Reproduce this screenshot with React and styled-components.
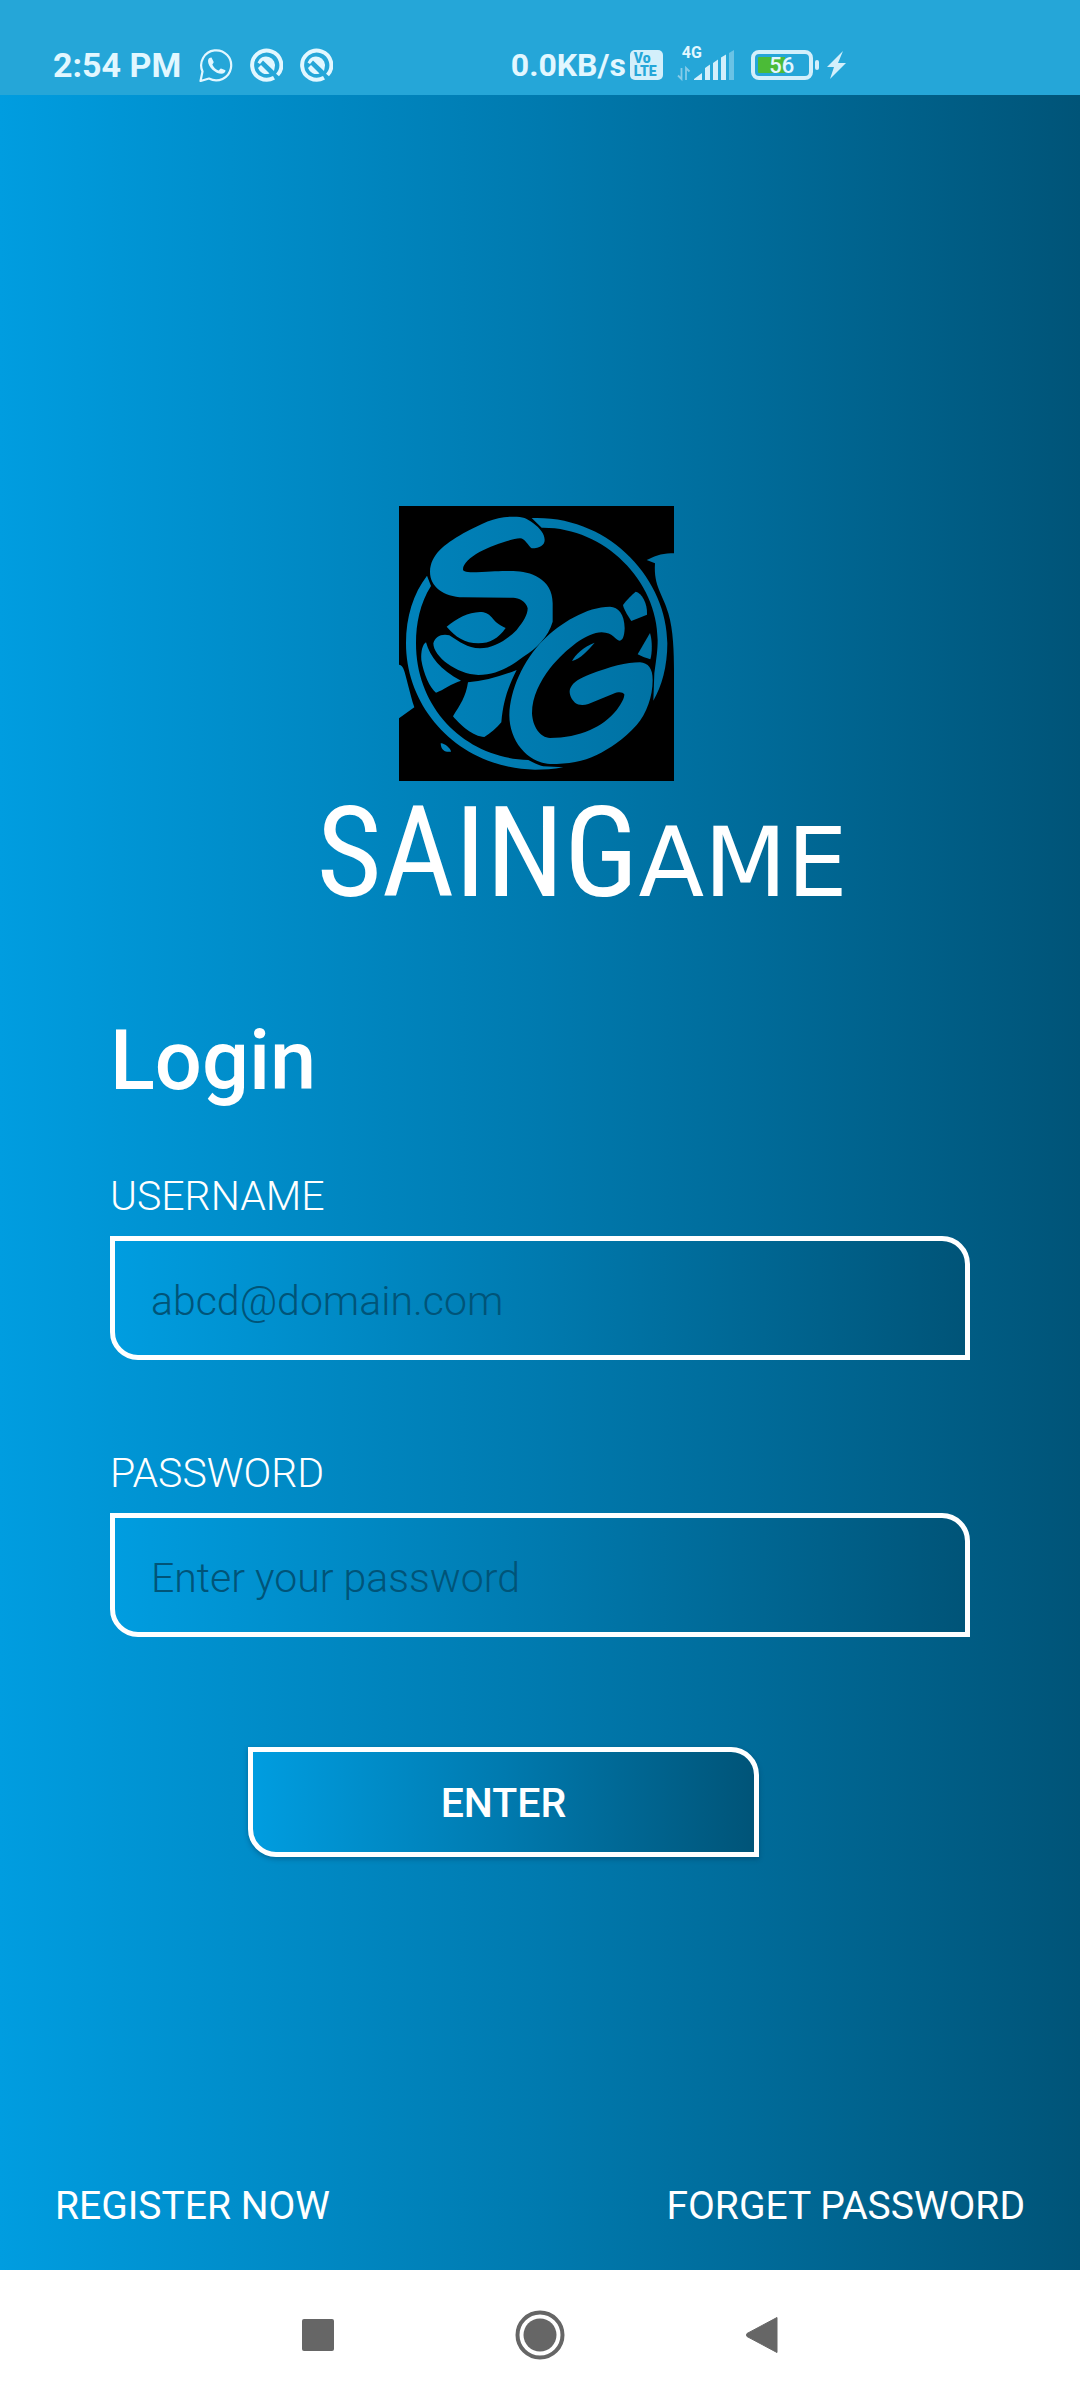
import React from "react";
import styled, { createGlobalStyle } from "styled-components";

const blueFade = "linear-gradient(90deg, #009de0 0%, #007aaf 50%, #005478 100%)";

const GlobalStyle = createGlobalStyle`
  *, *::before, *::after { box-sizing: border-box; }
  body {
    margin: 0;
    font-family: Roboto, "Noto Sans", sans-serif;
    color: #fff;
  }
`;

const Screen = styled.div`
  display: flex;
  flex-direction: column;
  min-height: 100vh;
  background: ${blueFade};
`;

const StatusBar = styled.header`
  display: flex;
  height: 95px;
  padding: 34px 53px 0;
  background: #25a6d8;
  color: #e2f7ff;
`;

const StatusGroup = styled.div`
  display: flex;
  align-items: center;
  flex: 0 0 ${(p) => p.$basis || "auto"};
  gap: ${(p) => p.$gap}px;
`;

const StatusText = styled.span`
  font-size: ${(p) => p.$size}px;
  font-weight: 700;
  line-height: 40px;
  white-space: nowrap;
`;

const StatusIcons = styled.span`
  display: flex;
  gap: 16px;
  padding-left: 2px;
`;

const Icon = styled.svg`
  display: block;
  flex: none;
`;

const VolteBadge = styled.span`
  display: flex;
  flex-direction: column;
  width: 33px;
  height: 30px;
  padding: 2px 4px;
  border-radius: 5px;
  background: #d3effb;
  color: #25a6d8;
  font-size: 14px;
  font-weight: 900;
  line-height: 13px;
`;

const Signal = styled.span`
  display: flex;
  flex-direction: column;
  width: 58px;
  height: 34px;
  margin-left: 10px;
  position: relative;
`;

const NetworkLabel = styled.span`
  position: absolute;
  left: 5px;
  top: -3px;
  font-size: 16px;
  font-weight: 700;
  line-height: 16px;
`;

const Battery = styled.span`
  display: flex;
  align-items: center;
  margin: 0 2px 0 12px;
  gap: 2px;

  &::after {
    content: "";
    width: 4px;
    height: 10px;
    border-radius: 2px;
    background: #d3effb;
  }
`;

const BatteryBody = styled.span`
  width: 62px;
  height: 30px;
  border: 4px solid #d3effb;
  border-radius: 8px;
  padding: 3px;
  background: linear-gradient(90deg, #4bbb37 56%, transparent 56%) content-box;
  font-size: 22px;
  font-weight: 500;
  line-height: 18px;
  text-align: center;
`;

const Main = styled.main`
  display: flex;
  flex: 1;
  flex-direction: column;
  padding: 411px 110px 0;
`;

const Brand = styled.div`
  display: flex;
  flex-direction: column;
  align-items: center;
`;

const Mark = styled.svg`
  display: block;
  width: 275px;
  height: 275px;
  margin-right: 7px;
`;

const Wordmark = styled.div`
  padding-left: 84px;
  font-family: "Roboto Condensed", "Liberation Sans Narrow", "DejaVu Sans Condensed", sans-serif;
  font-size: 126px;
  line-height: 144px;
  white-space: nowrap;
`;

const SmallCaps = styled.span`
  font-family: "DejaVu Sans", sans-serif;
  font-size: 96px;
  line-height: 96px;
`;

const Form = styled.form`
  display: flex;
  flex-direction: column;
  padding-top: 87px;
`;

const Title = styled.h1`
  margin: 0 0 61px;
  font-size: 83px;
  font-weight: 500;
  line-height: 98px;
`;

const Field = styled.div`
  display: flex;
  flex-direction: column;
  margin-bottom: 88px;
`;

const Label = styled.label`
  margin-bottom: 15px;
  font-size: 41px;
  font-weight: 300;
  line-height: 50px;
`;

const outline = `
  border: 5px solid #fff;
  border-radius: 0 28px 0 28px;
  background: ${blueFade} padding-box;
  color: #fff;
  font-family: inherit;
  font-size: 41px;
`;

const Input = styled.input`
  ${outline}
  width: 100%;
  height: 124px;
  padding: 5px 36px 0;
  font-weight: 300;
  outline: none;

  &::placeholder { color: #005478; opacity: 1; }
`;

const Submit = styled.button`
  ${outline}
  width: 511px;
  height: 110px;
  margin: 22px 0 0 138px;
  padding: 2px 0 0;
  font-weight: 500;
  box-shadow: 0 2px 5px rgba(0, 40, 70, 0.35);
`;

const Links = styled.nav`
  display: flex;
  justify-content: space-between;
  padding: 0 55px 39px;
`;

const TextLink = styled.a`
  color: #fff;
  font-size: 39px;
  line-height: 50px;
  text-decoration: none;
`;

const SystemNav = styled.footer`
  display: flex;
  justify-content: center;
  align-items: center;
  gap: 170px;
  height: 130px;
  background: #fff;
`;

const NavButton = styled.button`
  display: grid;
  place-items: center;
  width: 52px;
  height: 52px;
  padding: 0;
  border: 0;
  background: none;
`;

function WhatsAppIcon() {
  return (
    <Icon width="34" height="34" viewBox="0 0 34 34" aria-hidden="true">
      <path d="M1.500 33 3.500 23.500A15 15 0 1 1 10 30.500Z" fill="none" stroke="currentColor" strokeWidth="2.200" strokeLinejoin="round" />
      <path d="M9 13c0-2.500 1.500-3.500 3.500-3.500l2.200 4.600c0 1.300-1.300 1.900-1.300 2.700 1.200 2.700 3.300 4.500 6 5.600.9 0 1.700-2 2.600-2l4.500 1.900c0 2.200-1.700 3.500-4 3.500C16.500 25.800 9 19 9 13Z" fill="currentColor" />
    </Icon>
  );
}

function QIcon() {
  return (
    <Icon width="34" height="34" viewBox="0 0 34 34" aria-hidden="true">
      <path d="M28.500 27A14.600 14.600 0 1 0 25 29.800" fill="none" stroke="currentColor" strokeWidth="4" />
      <path d="M8.500 14.500A9 9 0 1 1 25.500 20.500L25 23 14 12.600l-3 3.400Z" fill="currentColor" />
      <path d="m9 20 3-3 8.500 8.500A9 9 0 0 1 9 20Z" fill="currentColor" />
    </Icon>
  );
}

function SignalIcon() {
  return (
    <Icon width="58" height="34" viewBox="0 0 58 34" aria-hidden="true">
      <g fill="none" stroke="#86cbe8" strokeWidth="1.800">
        <path d="M4.500 20v11L1 27.500M9 32V20l3.500 3.500" />
      </g>
      <g fill="#d3effb">
        <path d="M17 32v-1l8-6v7ZM28 32V20l5-3.500V32ZM36 32V15l5-3.500V32ZM44 32V9.500L49 6.500V32Z" />
        <path d="M52 32V5L57 2v30Z" opacity=".4" />
      </g>
    </Icon>
  );
}

function BrandMark() {
  return (
    <Mark viewBox="57 48 825 825" role="img" aria-label="SG">
      <mask id="cutouts" maskUnits="userSpaceOnUse" x="57" y="48" width="825" height="825">
        <rect x="57" y="48" width="825" height="825" fill="#fff" />
        <path d="M150 245C152 195 190 165 250 130C310 98 345 80 400 80C430 80 440 84 460 100C480 115 494 132 494 150C494 165 480 175 455 175C445 168 435 145 420 145C370 150 250 195 249 238C249 246 260 247 290 247C340 244 360 243 400 243C450 244 518 265 518 340L518 395C505 440 470 475 430 500C390 530 350 555 295 555C230 553 160 500 160 460C165 440 185 430 208 436C240 455 260 475 300 475C340 475 380 450 410 420C430 395 443 375 443 355C440 335 415 323 400 323L250 322C190 320 150 290 150 245Z" />
        <path d="M455 84C690 75 862 270 862 460C862 530 845 590 820 632L823 550C830 500 833 480 833 450C833 270 670 110 485 113Z" />
        <path d="M141 257L153 288C120 340 108 400 108 460C108 660 260 805 445 810C460 818 480 828 490 829L550 832C520 838 490 839 465 839C240 835 78 660 78 460C78 380 100 310 141 257Z" />
        <path d="M388 675C390 600 430 510 490 450C540 400 620 350 690 350C715 352 733 370 734 415C733 440 728 452 718 452C705 450 700 428 665 427C620 428 560 475 510 535C480 575 456 620 456 670C458 710 480 743 510 744C600 744 670 710 710 660C725 640 733 625 733 613C728 605 715 605 700 611L625 642C610 646 595 646 585 638C570 625 566 605 571 595C580 575 600 565 630 553C690 530 740 517 780 517C805 519 818 535 818 570C818 620 800 670 770 705C730 750 690 775 650 795C610 815 565 822 510 822C440 818 388 750 388 675Z" />
        <path d="M200 410C230 385 265 367 300 366C315 366 325 370 335 382C345 395 355 405 377 414C355 445 330 460 295 460C255 460 225 440 200 410Z" />
        <path d="M138 457C150 500 180 540 243 572C215 580 190 600 168 608C150 595 130 550 124 510C122 485 128 462 138 457Z" />
        <path d="M264 577C310 573 360 560 410 540C385 590 370 630 364 697C350 715 330 730 313 741C280 740 240 705 219 679C240 645 258 620 264 577Z" />
        <path d="M767 305C785 308 803 340 801 374L754 393C745 380 732 360 729 345C740 330 755 315 767 305Z" />
        <path d="M810 429C817 450 817 490 811 508C800 505 785 500 773 493Z" />
        <path d="M644 458C610 470 585 495 576 513C600 508 625 480 644 458Z" />
        <path d="M182 760C190 757 213 775 213 785C200 787 183 785 182 760Z" />
        <path d="M800 210C820 200 850 187 882 190V540C882 490 880 420 865 370C850 315 820 290 825 220Z" />
        <path d="M57 524C75 525 75 560 103 652L57 685Z" />
      </mask>
      <rect x="57" y="48" width="825" height="825" mask="url(#cutouts)" />
    </Mark>
  );
}

function TextField({ id, label, type, placeholder }) {
  return (
    <Field>
      <Label htmlFor={id}>{label}</Label>
      <Input id={id} type={type} placeholder={placeholder} />
    </Field>
  );
}

export default function App() {
  return (
    <>
      <GlobalStyle />
      <Screen>
        <StatusBar>
          <StatusGroup $basis="47%" $gap={16}>
            <StatusText $size={34}>2:54 PM</StatusText>
            <StatusIcons>
              <WhatsAppIcon />
              <QIcon />
              <QIcon />
            </StatusIcons>
          </StatusGroup>
          <StatusGroup $gap={4}>
            <StatusText $size={32}>0.0KB/s</StatusText>
            <VolteBadge>
              <span>Vo</span>
              <span>LTE</span>
            </VolteBadge>
            <Signal>
              <NetworkLabel>4G</NetworkLabel>
              <SignalIcon />
            </Signal>
            <Battery>
              <BatteryBody>56</BatteryBody>
            </Battery>
            <Icon width="22" height="30" viewBox="0 0 22 30" aria-hidden="true">
              <path d="M18 1 2 17h7L5 29 21 13h-8Z" fill="#d3effb" />
            </Icon>
          </StatusGroup>
        </StatusBar>
        <Main>
          <Brand>
            <BrandMark />
            <Wordmark>
              SAING<SmallCaps>AME</SmallCaps>
            </Wordmark>
          </Brand>
          <Form onSubmit={(e) => e.preventDefault()}>
            <Title>Login</Title>
            <TextField id="username" label="USERNAME" type="text" placeholder="abcd@domain.com" />
            <TextField id="password" label="PASSWORD" type="password" placeholder="Enter your password" />
            <Submit type="submit">ENTER</Submit>
          </Form>
        </Main>
        <Links>
          <TextLink href="#register">REGISTER NOW</TextLink>
          <TextLink href="#forget">FORGET PASSWORD</TextLink>
        </Links>
        <SystemNav>
          <NavButton type="button" aria-label="Recent apps">
            <Icon width="32" height="32" viewBox="0 0 32 32">
              <rect width="32" height="32" rx="2" fill="#666" />
            </Icon>
          </NavButton>
          <NavButton type="button" aria-label="Home">
            <Icon width="50" height="50" viewBox="0 0 50 50">
              <circle cx="25" cy="25" r="22.500" fill="none" stroke="#666" strokeWidth="4" />
              <circle cx="25" cy="25" r="16.500" fill="#666" />
            </Icon>
          </NavButton>
          <NavButton type="button" aria-label="Back">
            <Icon width="32" height="38" viewBox="0 0 32 38">
              <path d="M31 1.500V36.500L1 20.500Q0 19 1 17.500Z" fill="#666" stroke="#666" strokeLinejoin="round" />
            </Icon>
          </NavButton>
        </SystemNav>
      </Screen>
    </>
  );
}
